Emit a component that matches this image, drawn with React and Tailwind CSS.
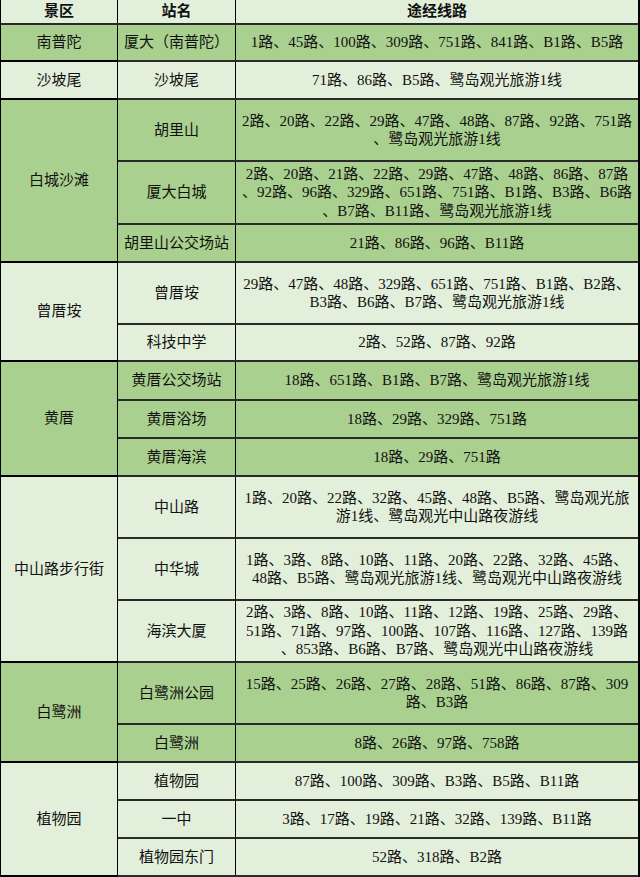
import React from "react";

const DARK = "bg-[#a9d08e]";
const LIGHT = "bg-[#e2efda]";

const groups = [
  {
    name: "南普陀",
    bg: DARK,
    rows: [{ s: "厦大（南普陀）", h: 37, l: ["1路、45路、100路、309路、751路、841路、B1路、B5路"] }],
  },
  {
    name: "沙坡尾",
    bg: LIGHT,
    rows: [{ s: "沙坡尾", h: 38, l: ["71路、86路、B5路、鹭岛观光旅游1线"] }],
  },
  {
    name: "白城沙滩",
    bg: DARK,
    rows: [
      { s: "胡里山", h: 62, l: ["2路、20路、22路、29路、47路、48路、87路、92路、751路", "、鹭岛观光旅游1线"] },
      {
        s: "厦大白城",
        h: 63,
        l: [
          "2路、20路、21路、22路、29路、47路、48路、86路、87路",
          "、92路、96路、329路、651路、751路、B1路、B3路、B6路",
          "、B7路、B11路、鹭岛观光旅游1线",
        ],
      },
      { s: "胡里山公交场站", h: 38, l: ["21路、86路、96路、B11路"] },
    ],
  },
  {
    name: "曾厝垵",
    bg: LIGHT,
    rows: [
      { s: "曾厝垵", h: 62, l: ["29路、47路、48路、329路、651路、751路、B1路、B2路、", "B3路、B6路、B7路、鹭岛观光旅游1线"] },
      { s: "科技中学", h: 37, l: ["2路、52路、87路、92路"] },
    ],
  },
  {
    name: "黄厝",
    bg: DARK,
    rows: [
      { s: "黄厝公交场站", h: 39, l: ["18路、651路、B1路、B7路、鹭岛观光旅游1线"] },
      { s: "黄厝浴场", h: 38, l: ["18路、29路、329路、751路"] },
      { s: "黄厝海滨", h: 38, l: ["18路、29路、751路"] },
    ],
  },
  {
    name: "中山路步行街",
    bg: LIGHT,
    rows: [
      { s: "中山路", h: 62, l: ["1路、20路、22路、32路、45路、48路、B5路、鹭岛观光旅", "游1线、鹭岛观光中山路夜游线"] },
      { s: "中华城", h: 62, l: ["1路、3路、8路、10路、11路、20路、22路、32路、45路、", "48路、B5路、鹭岛观光旅游1线、鹭岛观光中山路夜游线"] },
      {
        s: "海滨大厦",
        h: 62,
        l: [
          "2路、3路、8路、10路、11路、12路、19路、25路、29路、",
          "51路、71路、97路、100路、107路、116路、127路、139路",
          "、853路、B6路、B7路、鹭岛观光中山路夜游线",
        ],
      },
    ],
  },
  {
    name: "白鹭洲",
    bg: DARK,
    rows: [
      { s: "白鹭洲公园", h: 62, l: ["15路、25路、26路、27路、28路、51路、86路、87路、309", "路、B3路"] },
      { s: "白鹭洲", h: 38, l: ["8路、26路、97路、758路"] },
    ],
  },
  {
    name: "植物园",
    bg: LIGHT,
    rows: [
      { s: "植物园", h: 38, l: ["87路、100路、309路、B3路、B5路、B11路"] },
      { s: "一中", h: 38, l: ["3路、17路、19路、21路、32路、139路、B11路"] },
      { s: "植物园东门", h: 38, l: ["52路、318路、B2路"] },
    ],
  },
];

export default function App() {
  return (
    <div
      className="w-[640px] h-[877px] overflow-hidden border-l border-r-2 border-black text-[15px] text-[#111] flex flex-col"
      style={{ fontFamily: '"Liberation Serif", "Noto Sans CJK SC", serif' }}
    >
      {/* header */}
      <div className={`flex h-[25px] shrink-0 ${LIGHT} border-b-2 border-[#2a2a2a] font-bold`}>
        <div className="w-[117px] shrink-0 border-r border-black flex items-center justify-center">景区</div>
        <div className="w-[118px] shrink-0 border-r border-black flex items-center justify-center">站名</div>
        <div className="flex-1 flex items-center justify-center">途经线路</div>
      </div>
      {groups.map((g, gi) => (
        <div key={gi} className={`flex shrink-0 ${g.bg}`}>
          <div className="w-[117px] shrink-0 border-r border-b-2 border-black flex items-center justify-center">
            {g.name}
          </div>
          <div className="flex-1 flex flex-col">
            {g.rows.map((r, ri) => (
              <div
                key={ri}
                className="flex border-b-2 border-[#2a2a2a] box-border"
                style={{ height: r.h }}
              >
                <div className="w-[118px] shrink-0 border-r border-black flex items-center justify-center whitespace-nowrap">
                  {r.s}
                </div>
                <div className="flex-1 flex flex-col items-center justify-center leading-[18.5px] whitespace-nowrap overflow-hidden">
                  {r.l.map((t, ti) => (
                    <div key={ti}>{t}</div>
                  ))}
                </div>
              </div>
            ))}
          </div>
        </div>
      ))}
    </div>
  );
}
